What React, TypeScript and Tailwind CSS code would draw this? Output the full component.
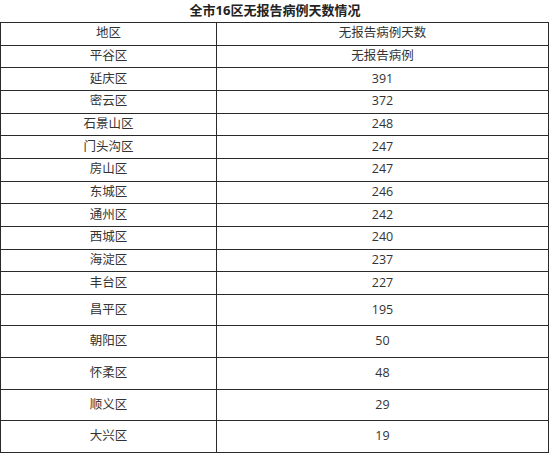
import React from "react";

const rows: [string, string][] = [
  ["平谷区", "无报告病例"],
  ["延庆区", "391"],
  ["密云区", "372"],
  ["石景山区", "248"],
  ["门头沟区", "247"],
  ["房山区", "247"],
  ["东城区", "246"],
  ["通州区", "242"],
  ["西城区", "240"],
  ["海淀区", "237"],
  ["丰台区", "227"],
];

const tallRows: [string, string][] = [
  ["昌平区", "195"],
  ["朝阳区", "50"],
  ["怀柔区", "48"],
  ["顺义区", "29"],
  ["大兴区", "19"],
];

const Row = ({ a, b, tall }: { a: string; b: string; tall?: boolean }) => (
  <div className={`flex border-b border-[#2a2a2a] ${tall ? "h-[31.6px]" : "h-[22.67px]"}`}>
    <div className="w-[216px] border-r border-[#2a2a2a] flex items-center justify-center">{a}</div>
    <div className="flex-1 flex items-center justify-center">{b}</div>
  </div>
);

export default function App() {
  return (
    <div
      className="w-[550px] h-[454px] bg-white text-[#333] overflow-hidden"
      style={{ fontFamily: '"Open Sans", "Noto Sans CJK SC", sans-serif' }}
    >
      <div className="h-[22px] flex items-center justify-center text-[13px] font-bold text-[#222]">
        全市16区无报告病例天数情况
      </div>
      <div className="w-[549px] border-t border-l border-r border-[#2a2a2a] text-[12.5px]">
        <Row a="地区" b="无报告病例天数" />
        {rows.map(([a, b]) => (
          <Row key={a} a={a} b={b} />
        ))}
        {tallRows.map(([a, b]) => (
          <Row key={a} a={a} b={b} tall />
        ))}
      </div>
    </div>
  );
}
